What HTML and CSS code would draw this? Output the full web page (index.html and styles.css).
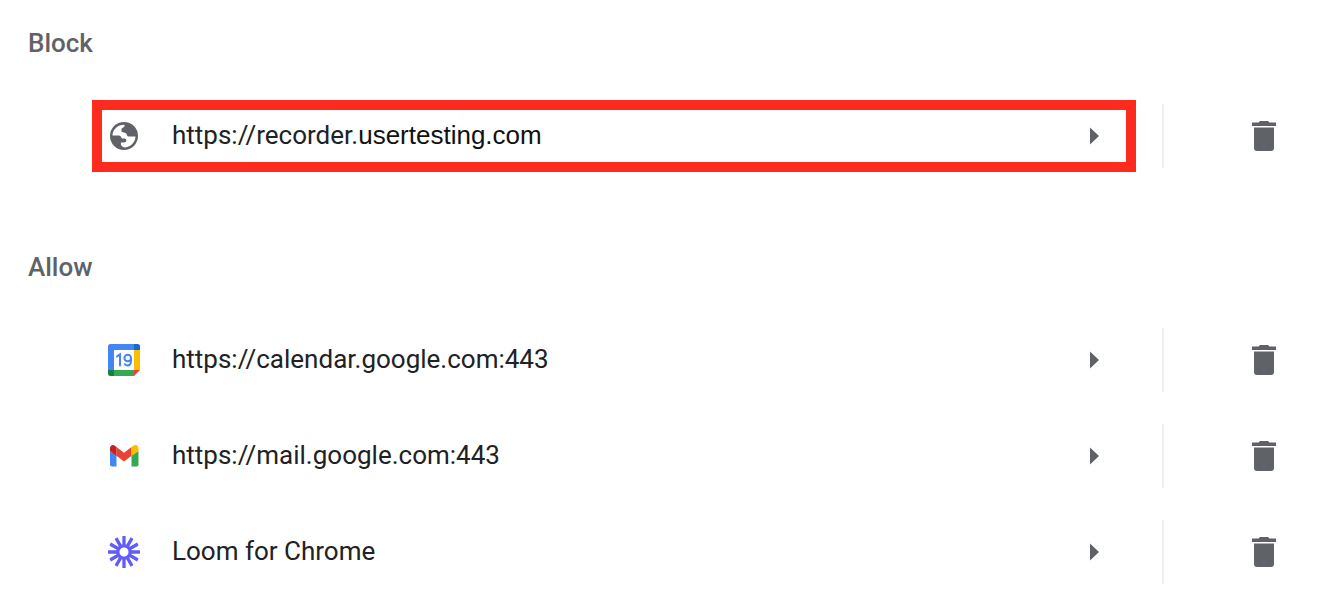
FILE: index.html
```html
<!DOCTYPE html>
<html lang="en">
<head>
<meta charset="utf-8">
<meta name="viewport" content="width=device-width, initial-scale=1">
<title>Site permissions</title>
<link rel="stylesheet" href="styles.css">
</head>
<body>
<svg class="symbols" aria-hidden="true">
  <symbol id="arrow" viewBox="0 0 10 18"><path d="M0 0.5V17.5L9 9Z" fill="#5f6368"/></symbol>
  <symbol id="trash" viewBox="0 0 32 32"><path d="M4 6.500H10.500L12 5H20L21.500 6.500H28V10H4ZM6 11.500H26V32Q26 35 23 35H9Q6 35 6 32Z" fill="#5f6368" transform="translate(0 -4)"/></symbol>
</svg>
<main class="permissions">
  <section class="group">
    <h2 class="group-title">Block</h2>
    <ul class="sites">
      <li class="site">
        <button class="site-link highlighted" type="button">
          <svg class="site-icon" viewBox="0 0 32 32" aria-hidden="true">
            <circle cx="16" cy="16" r="14" fill="#5f6368"/>
            <path d="M4.500 15.500C4.700 9.500 9.500 4.700 16.500 4.700V6C16.500 7.500 13.500 7.500 13.500 9.500V11.500C13.500 12.700 18.500 12 18.800 14.500C19 16.300 20 16.500 21.500 16.500H27.500C27.300 22 23 27 17 27.400C14 27.400 12.700 25.500 12.800 22.500H16C18 22.500 18.300 21 18.300 20C18.300 18.300 16 18.500 14.500 18.500C13 18.500 13.300 15.500 11 15.500Z" fill="#fff"/>
          </svg>
          <span class="site-name">https://recorder.<span class="site-domain">usertesting.com</span></span>
          <svg class="arrow" aria-hidden="true"><use href="#arrow"/></svg>
        </button>
        <button class="remove" type="button" aria-label="Remove recorder.usertesting.com"><svg class="trash" aria-hidden="true"><use href="#trash"/></svg></button>
      </li>
    </ul>
  </section>
  <section class="group">
    <h2 class="group-title">Allow</h2>
    <ul class="sites">
      <li class="site">
        <button class="site-link" type="button">
          <svg class="site-icon" viewBox="0 0 32 32" aria-hidden="true">
            <path d="M2.500 0H26V6H6V26H0V2.500Q0 0 2.500 0Z" fill="#4285f4"/>
            <path d="M26 0H29.500Q32 0 32 2.500V6H26Z" fill="#1967d2"/>
            <path d="M26 6H32V26H26Z" fill="#fbbc04"/>
            <path d="M6 26H26V32H6Z" fill="#34a853"/>
            <path d="M0 26H6V32H2.500Q0 32 0 29.500Z" fill="#188038"/>
            <path d="M26 26H32L26 32Z" fill="#ea4335"/>
            <path d="M6 6H26V26H6Z" fill="#fff"/>
            <path d="M8.300 12.800L12 10.300V22.300M23 14A3.300 3.300 0 1 0 16.400 14A3.300 3.300 0 1 0 23 14V16.500Q23 21.500 19.500 21.500Q17.300 21.500 16.500 19.500" fill="none" stroke="#4285f4" stroke-width="2"/>
          </svg>
          <span class="site-name">https://calendar.google.com:443</span>
          <svg class="arrow" aria-hidden="true"><use href="#arrow"/></svg>
        </button>
        <button class="remove" type="button" aria-label="Remove calendar.google.com"><svg class="trash" aria-hidden="true"><use href="#trash"/></svg></button>
      </li>
      <li class="site">
        <button class="site-link" type="button">
          <svg class="site-icon" viewBox="0 0 32 32" aria-hidden="true">
            <path d="M2 11L8.500 15.500V26.500H4Q2 26.500 2 24.500Z" fill="#4285f4"/>
            <path d="M23.500 15.500L30.500 11V24.500Q30.500 26.500 28.500 26.500H23.500Z" fill="#34a853"/>
            <path d="M8.500 7L16 12.700L23.500 7V15.700L16 21.500L8.500 15.700Z" fill="#ea4335"/>
            <path d="M2 11V8.500C2 5 5 4 7.200 6L8.500 7V15.900L2 11Z" fill="#c5221f"/>
            <path d="M23.500 7L25 6C27.500 4 30.500 5.200 30.500 8.500V11L23.500 15.900Z" fill="#fbbc04"/>
          </svg>
          <span class="site-name">https://mail.google.com:443</span>
          <svg class="arrow" aria-hidden="true"><use href="#arrow"/></svg>
        </button>
        <button class="remove" type="button" aria-label="Remove mail.google.com"><svg class="trash" aria-hidden="true"><use href="#trash"/></svg></button>
      </li>
      <li class="site">
        <button class="site-link" type="button">
          <svg class="site-icon" viewBox="0 0 32 32" aria-hidden="true">
            <g fill="none" stroke="#625df5" stroke-width="3.300">
              <path id="rays" d="M16 0V10M16 22V32M0 16H10M22 16H32"/>
              <use href="#rays" transform="rotate(30 16 16)"/>
              <use href="#rays" transform="rotate(60 16 16)"/>
              <circle cx="16" cy="16" r="6.200" stroke-width="3.300"/>
            </g>
          </svg>
          <span class="site-name">Loom for Chrome</span>
          <svg class="arrow" aria-hidden="true"><use href="#arrow"/></svg>
        </button>
        <button class="remove" type="button" aria-label="Remove Loom for Chrome"><svg class="trash" aria-hidden="true"><use href="#trash"/></svg></button>
      </li>
    </ul>
  </section>
</main>
</body>
</html>
```
FILE: styles.css
```css
* { box-sizing: border-box; }
body {
  margin: 0;
  background: #fff;
  color: #202124;
  font-family: Roboto, "Liberation Sans", sans-serif;
  font-size: 26px;
  line-height: 32px;
}
.symbols { position: absolute; width: 0; height: 0; }
.group + .group { padding-top: 40px; }
.group-title {
  margin: 0;
  padding: 27px 28px 29px;
  color: #5f6368;
  font-size: 26px;
  font-weight: 500;
  line-height: 32px;
}
.sites { margin: 0; padding: 0; list-style: none; }
.site {
  display: flex;
  align-items: center;
  min-height: 96px;
  padding: 0 54px 0 92px;
}
button {
  border: 0;
  background: none;
  color: inherit;
  font: inherit;
  cursor: pointer;
}
.site-link {
  display: flex;
  flex: 1;
  align-items: center;
  min-width: 0;
  min-height: 72px;
  padding: 0 26px 0 6px;
  border: 10px solid transparent;
  text-align: left;
}
.highlighted { border-color: #fc2b1e; }
.site-icon { flex: none; width: 32px; height: 32px; margin-right: 32px; }
.site-name { flex: 1; min-width: 0; padding-bottom: 2px; }
.site-domain { font-family: "Liberation Sans", Arial, sans-serif; color: #111; }
.arrow { flex: none; width: 10px; height: 18px; }
.remove {
  display: flex;
  align-items: center;
  justify-content: flex-end;
  width: 126px;
  height: 64px;
  margin-left: 26px;
  padding: 0 8px;
  border-left: 2px solid #eee;
}
.trash { width: 32px; height: 32px; }
```
